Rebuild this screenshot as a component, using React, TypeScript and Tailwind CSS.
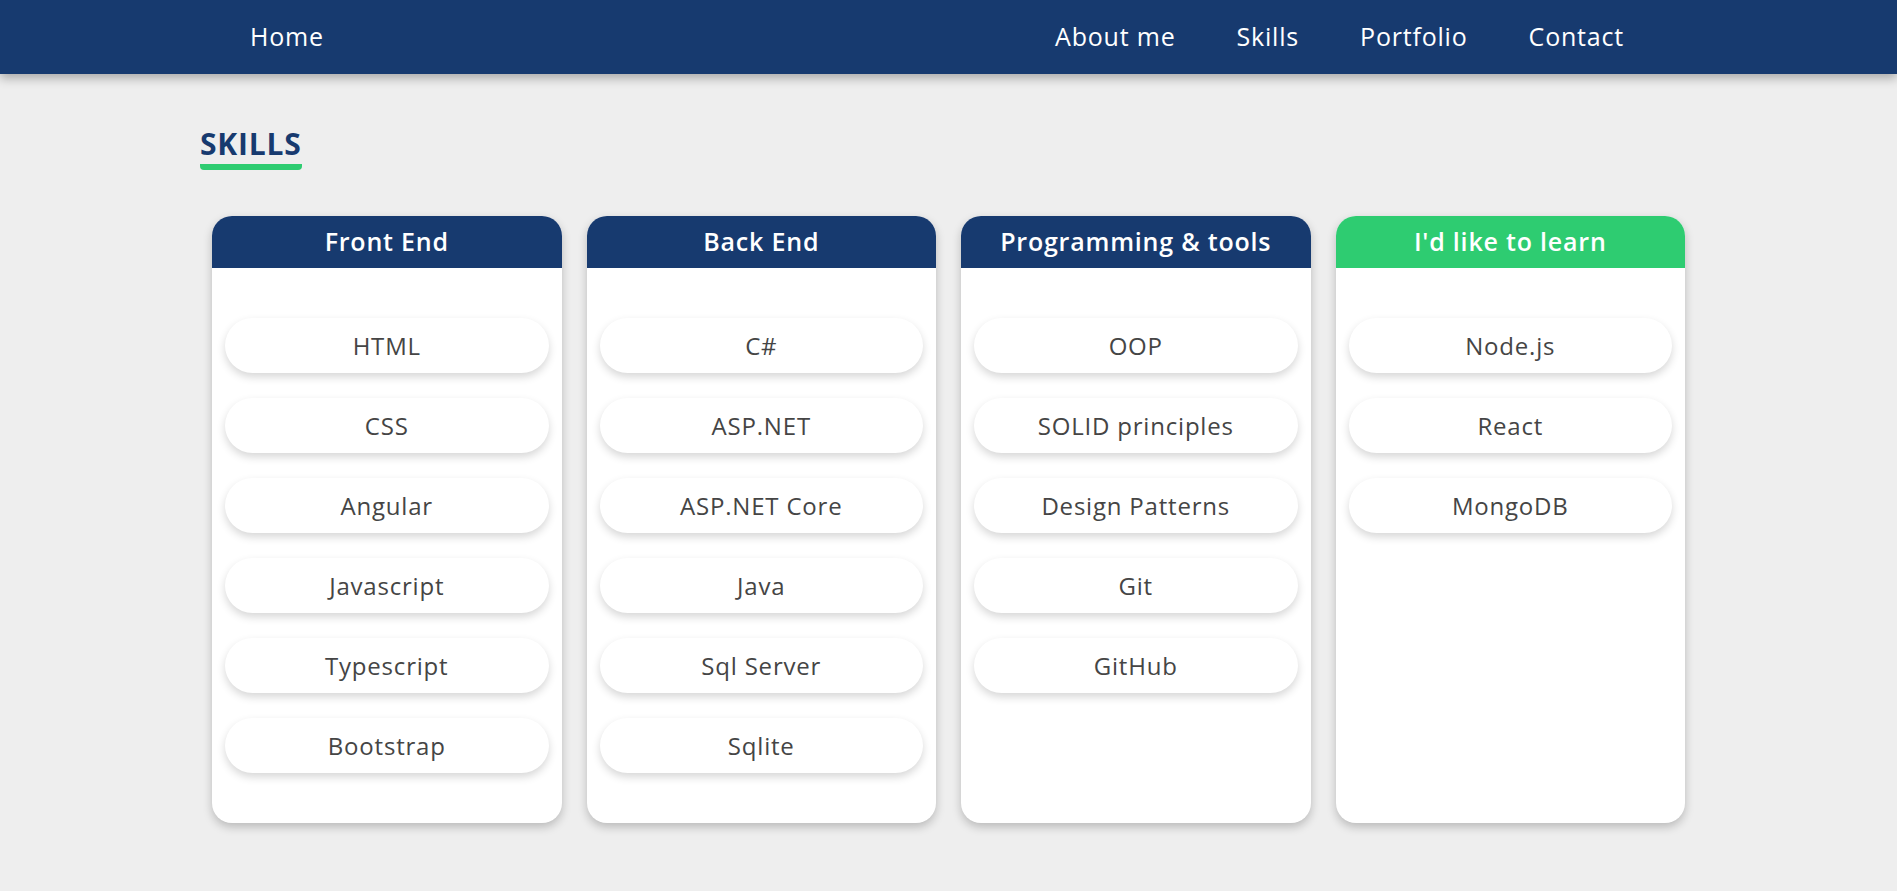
const groups = [
  {
    title: "Front End",
    accent: "bg-[#173a6f]",
    items: ["HTML", "CSS", "Angular", "Javascript", "Typescript", "Bootstrap"],
  },
  {
    title: "Back End",
    accent: "bg-[#173a6f]",
    items: ["C#", "ASP.NET", "ASP.NET Core", "Java", "Sql Server", "Sqlite"],
  },
  {
    title: "Programming & tools",
    accent: "bg-[#173a6f]",
    items: ["OOP", "SOLID principles", "Design Patterns", "Git", "GitHub"],
  },
  {
    title: "I'd like to learn",
    accent: "bg-[#2ecc71]",
    items: ["Node.js", "React", "MongoDB"],
  },
]

function Nav() {
  return (
    <nav className="h-[74px] bg-[#173a6f] shadow-[0_4px_10px_rgba(0,0,0,0.3)] relative z-10">
      <div className="w-[1497px] mx-auto h-full flex items-center justify-between text-white text-[25px] font-medium">
        <a className="ml-[50px]" href="#">Home</a>
        <div className="flex gap-[61px] mr-[73px]">
          <a href="#">About me</a>
          <a href="#">Skills</a>
          <a href="#">Portfolio</a>
          <a href="#">Contact</a>
        </div>
      </div>
    </nav>
  )
}

function SkillCard({ title, accent, items }: { title: string; accent: string; items: string[] }) {
  return (
    <div className="w-[350px] bg-white rounded-[20px] overflow-hidden shadow-[0_4px_10px_rgba(0,0,0,0.22)] pb-[50px]">
      <div className={`${accent} h-[52px] flex items-center justify-center text-white text-[25px] font-semibold`}>
        {title}
      </div>
      <ul className="px-[13px] pt-[50px] flex flex-col gap-[25px]">
        {items.map((s) => (
          <li
            key={s}
            className="h-[55px] rounded-full bg-white flex items-center justify-center text-[24px] text-[#454545] shadow-[0_4px_8px_rgba(0,0,0,0.16)]"
          >
            {s}
          </li>
        ))}
      </ul>
    </div>
  )
}

export default function App() {
  return (
    <div className="min-h-[891px] bg-[#eeeeee] font-['Open_Sans',sans-serif] tracking-[0.05em]">
      <Nav />

      {/* Skills */}
      <section className="w-[1497px] mx-auto pt-[52px]">
        <h2 className="inline-block text-[30px] leading-[36px] font-bold text-[#173a6f]">
          SKILLS
          <span className="block h-[6px] mt-[2px] bg-[#2ecc71] rounded-b-[4px]"></span>
        </h2>
        <div className="flex gap-[25px] px-[12px] mt-[46px]">
          {groups.map((g) => (
            <SkillCard key={g.title} {...g} />
          ))}
        </div>
      </section>
    </div>
  )
}
